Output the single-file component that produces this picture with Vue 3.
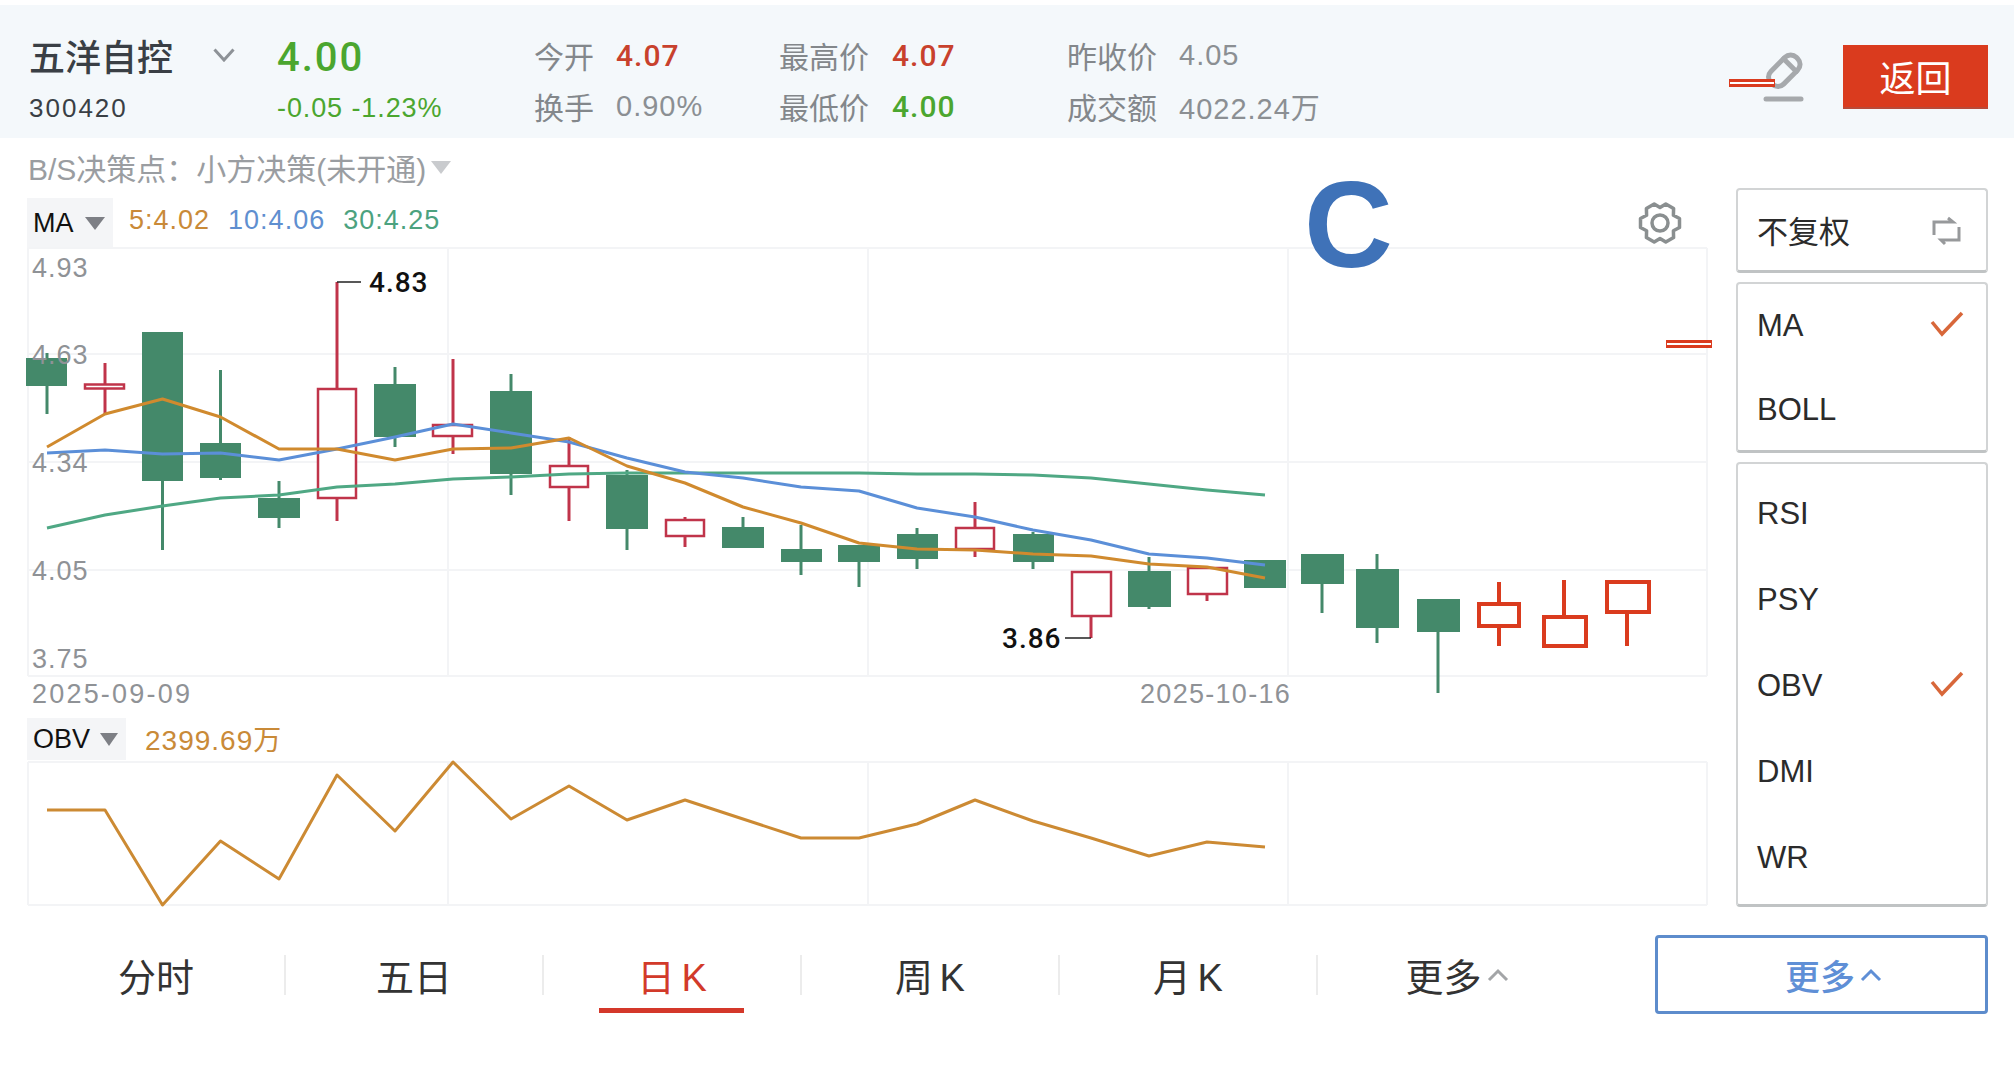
<template>
  <div class="page">
    <header class="quote">
      <div class="col col-name">
        <div class="line name">
          <span>五洋自控</span>
          <svg class="chevron" width="22" height="14" viewBox="0 0 22 14"><path d="M1.5 1.5 11 12 20.5 1.5" /></svg>
        </div>
        <div class="line code">300420</div>
      </div>
      <div class="col col-price">
        <div class="line price">4.00</div>
        <div class="line change">-0.05 -1.23%</div>
      </div>
      <div v-for="col in stats" :key="col.key" class="col stat-col" :class="`stat-${col.key}`">
        <div v-for="item in col.items" :key="item.label" class="line stat">
          <span class="stat-label">{{ item.label }}</span>
          <span class="stat-value" :class="item.tone">{{ item.value }}</span>
        </div>
      </div>
      <div class="actions">
        <svg class="pencil" width="46" height="56" viewBox="0 0 46 56">
          <g transform="rotate(45 24 23)">
            <rect x="15" y="6" width="18" height="36" rx="8" />
            <path d="M15 16H33" />
          </g>
          <path class="pencil-line" d="M5 52H40" />
        </svg>
        <button class="back">返回</button>
      </div>
    </header>

    <div class="body">
      <section class="charts">
        <div class="bs-row">
          <span>B/S决策点：小方决策(未开通)</span>
          <i class="tri tri-light"></i>
        </div>
        <div class="ma-row">
          <div class="tab tab-ma">MA<i class="tri"></i></div>
          <span class="ma-val c-orange">5:4.02</span>
          <span class="ma-val c-blue">10:4.06</span>
          <span class="ma-val c-green">30:4.25</span>
          <svg class="gear" width="46" height="46" viewBox="-23 -23 46 46">
            <path :d="gearPath" />
            <circle r="8" />
          </svg>
        </div>

        <svg class="kline" width="1736" height="460" viewBox="0 248 1736 460">
          <g class="grid">
            <path v-for="y in gridY" :key="y" :d="`M28 ${y}H1707`" />
            <path v-for="x in gridX" :key="x" :d="`M${x} 248V676`" />
          </g>
          <g v-for="c in candles" :key="c.x" :class="['candle', c.tone]">
            <line v-if="c.high < c.top" :x1="c.mid" :x2="c.mid" :y1="c.high" :y2="c.top" />
            <line v-if="c.low > c.bottom" :x1="c.mid" :x2="c.mid" :y1="c.bottom" :y2="c.low" />
            <rect :x="c.x" :y="c.top" :width="c.w" :height="c.bottom - c.top" />
          </g>
          <polyline class="avg avg-green" :points="maGreen" />
          <polyline class="avg avg-blue" :points="maBlue" />
          <polyline class="avg avg-orange" :points="maOrange" />
          <path class="leader" d="M337 282H361M1065 638H1091" />
          <text class="mark" x="369" y="292">4.83</text>
          <text class="mark" x="1002" y="648">3.86</text>
          <text v-for="a in axis" :key="a.text" class="axis" x="32" :y="a.y">{{ a.text }}</text>
          <text class="axis date-a" x="32" y="703">2025-09-09</text>
          <text class="axis date-b" x="1140" y="703">2025-10-16</text>
        </svg>

        <div class="obv-row">
          <div class="tab tab-obv">OBV<i class="tri"></i></div>
          <span class="obv-val">2399.69万</span>
        </div>
        <svg class="obv" width="1736" height="148" viewBox="0 760 1736 148">
          <g class="grid">
            <path d="M28 762H1707M28 905H1707" />
            <path v-for="x in gridX" :key="x" :d="`M${x} 762V905`" />
          </g>
          <polyline class="avg avg-obv" :points="obvLine" />
        </svg>
      </section>

      <aside class="side">
        <div class="box box-fq">
          <div class="side-item">
            <span>不复权</span>
            <svg class="swap" width="30" height="30" viewBox="0 0 30 30">
              <path d="M2 19V6H21L16 2M27 11V24H9L13 28" />
            </svg>
          </div>
        </div>
        <div v-for="(group, i) in menus" :key="i" class="box">
          <div v-for="item in group" :key="item.name" class="side-item">
            <span>{{ item.name }}</span>
            <svg v-if="item.on" class="tick" width="36" height="26" viewBox="0 0 36 26"><path d="M3 11 13 23 33 2" /></svg>
          </div>
        </div>
      </aside>
    </div>

    <footer class="bottom">
      <nav class="periods">
        <div v-for="p in periods" :key="p" class="period" :class="{ active: p === '日 K' }">{{ p }}</div>
        <div class="period period-more">
          更多<svg class="caret" width="22" height="14" viewBox="0 0 22 14"><path d="M2 12 11 3 20 12" /></svg>
        </div>
      </nav>
      <button class="more">
        更多<svg class="caret" width="22" height="14" viewBox="0 0 22 14"><path d="M2 12 11 3 20 12" /></svg>
      </button>
    </footer>

    <span class="big-c">C</span>
    <i class="redact redact-a"></i>
    <i class="redact redact-b"></i>
  </div>
</template>

<script setup>
const stats = [
  { key: 'a', items: [
    { label: '今开', value: '4.07', tone: 'up' },
    { label: '换手', value: '0.90%', tone: '' },
  ] },
  { key: 'b', items: [
    { label: '最高价', value: '4.07', tone: 'up' },
    { label: '最低价', value: '4.00', tone: 'down' },
  ] },
  { key: 'c', items: [
    { label: '昨收价', value: '4.05', tone: '' },
    { label: '成交额', value: '4022.24万', tone: '' },
  ] },
]

const menus = [
  [{ name: 'MA', on: true }, { name: 'BOLL' }],
  [{ name: 'RSI' }, { name: 'PSY' }, { name: 'OBV', on: true }, { name: 'DMI' }, { name: 'WR' }],
]

const periods = ['分时', '五日', '日 K', '周 K', '月 K']

const gridY = [248, 354, 462, 570, 676]
const gridX = [28, 448, 868, 1288, 1707]

const axis = [
  { text: '4.93', y: 277 },
  { text: '4.63', y: 364 },
  { text: '4.34', y: 472 },
  { text: '4.05', y: 580 },
  { text: '3.75', y: 668 },
]

// x, right, top, bottom, high, low, mid, tone
const raw = [
  [26, 67, 358, 386, 353, 414, 47, 'g'],
  [85, 124, 384.5, 388.5, 363, 415, 105, 'r'],
  [142, 183, 332, 481, 332, 550, 162.5, 'g'],
  [200, 241, 443, 478, 370, 480, 220.5, 'g'],
  [258, 300, 498, 518, 481, 528, 279, 'g'],
  [318, 356, 389, 498, 282, 521, 337, 'r'],
  [374, 416, 384, 437, 367, 447, 395, 'g'],
  [433, 472, 425, 436, 359, 454, 453, 'r'],
  [490, 532, 391, 474, 374, 495, 511, 'g'],
  [550, 588, 466, 487, 437, 521, 569, 'r'],
  [606, 648, 475, 529, 470, 550, 627, 'g'],
  [666, 704, 520, 536, 517, 547, 685, 'r'],
  [722, 764, 527, 548, 517, 548, 743, 'g'],
  [781, 822, 549, 562, 525, 575, 801, 'g'],
  [838, 880, 545, 562, 545, 587, 859, 'g'],
  [897, 938, 534, 559, 528, 569, 917, 'g'],
  [956, 994, 528, 549, 502, 557, 975, 'r'],
  [1013, 1054, 534, 562, 532, 569, 1033, 'g'],
  [1072, 1111, 572, 616, 572, 638, 1091, 'r'],
  [1128, 1171, 571, 607, 557, 609, 1149, 'g'],
  [1188, 1227, 568, 594, 568, 601, 1207, 'r'],
  [1244, 1286, 560, 588, 560, 588, 1265, 'g'],
  [1301, 1344, 554, 584, 554, 613, 1322, 'g'],
  [1356, 1399, 569, 628, 554, 643, 1377, 'g'],
  [1417, 1460, 599, 632, 599, 693, 1438, 'g'],
  [1479, 1519, 604, 626, 582, 646, 1499, 'o'],
  [1544, 1586, 617, 646, 580, 646, 1564, 'o'],
  [1607, 1649, 582, 612, 582, 646, 1627, 'o'],
]

const candles = raw.map(([x, right, top, bottom, high, low, mid, tone]) => ({
  x, w: right - x, top, bottom, high, low, mid, tone,
}))

const xs = [47, 105, 162.5, 220.5, 279, 337, 395, 453, 511, 569, 627, 685, 743, 801, 859, 917, 975, 1033, 1091, 1149, 1207, 1265]
const toPoints = (ys) => ys.map((y, i) => `${xs[i]},${y}`).join(' ')

const maOrange = toPoints([447, 414, 399, 417, 449, 449, 460, 449, 448, 438, 466, 483, 507, 523, 543, 549, 550, 554, 556, 564, 567, 578])
const maBlue = toPoints([453, 450, 454, 453, 460, 449, 437, 424, 433, 442, 458, 472, 478, 487, 491, 508, 517, 530, 540, 554, 558, 565])
const maGreen = toPoints([528, 515, 506, 498, 495, 487, 484, 479, 477, 474, 473, 473, 473, 473, 473, 474, 474, 475, 478, 484, 490, 495])
const obvLine = toPoints([810, 810, 905, 841, 879, 775, 831, 762, 819, 786, 820, 800, 819, 838, 838, 824, 800, 821, 838, 856, 842, 847])

// six rounded teeth, flat on the left and right
const gearPath = (() => {
  const pts = []
  for (let k = 0; k < 6; k++) {
    const a = k * 60
    for (const [deg, r] of [[a - 13, 20], [a + 13, 20], [a + 30, 15.5]]) {
      const t = (deg * Math.PI) / 180
      pts.push(`${(Math.cos(t) * r).toFixed(1)} ${(Math.sin(t) * r).toFixed(1)}`)
    }
  }
  return `M${pts.join('L')}Z`
})()
</script>

<style>
html, body { background: #fff; }
</style>

<style scoped>
.page {
  position: relative;
  width: 2014px;
  height: 1090px;
  overflow: hidden;
  background: #fff;
  font-family: "Liberation Sans", "Noto Sans CJK SC", sans-serif;
  color: #2b2b2b;
}

.quote {
  display: flex;
  box-sizing: border-box;
  height: 133px;
  margin-top: 5px;
  padding: 31px 26px 0 29px;
  background: #f4f8fb;
}
.col { display: flex; flex-direction: column; gap: 12px; }
.line { display: flex; align-items: center; box-sizing: border-box; height: 40px; }
.col-name { width: 248px; }
.col-price { width: 257px; }
.name { padding-bottom: 2px; font-size: 36px; font-weight: 500; color: #3a3f45; }
.chevron { margin-left: 40px; fill: none; stroke: #8d9297; stroke-width: 3; }
.code { font-size: 26px; color: #3a3f45; letter-spacing: 2px; }
.price { padding-top: 2px; font-family: Roboto, "Liberation Sans", sans-serif; font-size: 40px; font-weight: 500; color: #4ba62f; letter-spacing: 2px; }
.change { font-size: 27px; color: #4ba62f; letter-spacing: 0.9px; }

.stat-col { gap: 11px; margin-top: -1px; }
.stat-label { font-size: 30px; color: #83878b; }
.stat-value { font-size: 29px; color: #8b8f93; letter-spacing: 1px; }
.stat-value.up { font-family: Roboto, "Liberation Sans", sans-serif; color: #c8412d; font-size: 30px; font-weight: 500; }
.stat-value.down { font-family: Roboto, "Liberation Sans", sans-serif; color: #4ba62f; font-size: 30px; font-weight: 500; }
.stat-a { width: 245px; }
.stat-a .stat-label { width: 82px; }
.stat-b { width: 288px; }
.stat-b .stat-label { width: 113px; }
.stat-c .stat-label { width: 112px; }

.actions { display: flex; align-items: flex-start; margin-left: auto; padding-top: 9px; }
.pencil { margin-right: 36px; margin-top: 2px; fill: none; stroke: #a6a9ac; stroke-width: 5; stroke-linecap: round; }
.pencil-line { stroke-width: 5; }
.back {
  width: 145px;
  height: 64px;
  padding: 0;
  border: 0;
  border-bottom: 2px solid #b94a38;
  background: #da3b1e;
  color: #fff;
  font: 36px "Liberation Sans", "Noto Sans CJK SC", sans-serif;
}

.body { display: flex; }
.charts { width: 1736px; flex-shrink: 0; }
.bs-row {
  display: flex;
  align-items: center;
  height: 58px;
  padding: 0 0 2px 28px;
  color: #9a9da1;
  font-size: 30px;
}
.tri {
  display: inline-block;
  width: 0;
  height: 0;
  border-left: 10px solid transparent;
  border-right: 10px solid transparent;
  border-top: 13px solid #7d7f85;
}
.tri-light { margin-left: 5px; border-top-color: #c9cbce; }
.ma-row { display: flex; align-items: center; height: 50px; padding-left: 27px; }
.tab {
  display: flex;
  align-items: center;
  box-sizing: border-box;
  height: 100%;
  padding-left: 6px;
  background: #f4f5f7;
  color: #111;
  font-size: 27px;
}
.tab-ma { width: 86px; }
.tab-ma .tri { margin-left: 11px; }
.ma-val { padding-bottom: 5px; font-size: 27px; letter-spacing: 1px; }
.c-orange { margin-left: 16px; color: #c98a38; }
.c-blue { margin-left: 18px; color: #5f8fd0; }
.c-green { margin-left: 18px; color: #4ca27f; }
.gear { margin-left: auto; margin-right: 53px; fill: none; stroke: #8a8f90; stroke-width: 3.5; stroke-linejoin: round; }

.kline, .obv { display: block; overflow: visible; }
.grid path { fill: none; stroke: #f3f4f6; stroke-width: 2; }
.candle line { stroke-width: 3; }
.candle rect { stroke-width: 3; }
.g line { stroke: #44896a; }
.g rect { fill: #44896a; stroke: none; }
.r line { stroke: #c0344a; }
.r rect { fill: #fff; stroke: #c0344a; stroke-width: 2.5; }
.o line { stroke: #da3b1e; stroke-width: 4; }
.o rect { fill: #fff; stroke: #da3b1e; stroke-width: 4; }
.avg { fill: none; stroke-width: 3; stroke-linejoin: round; }
.avg-orange { stroke: #d08a2e; }
.avg-blue { stroke: #5b8fd8; }
.avg-green { stroke: #4fa884; }
.avg-obv { stroke: #cc8a33; }
.leader { fill: none; stroke: #222; stroke-width: 1.5; }
.mark { font-family: Roboto, "Liberation Sans", sans-serif; font-size: 28px; font-weight: 500; fill: #111; letter-spacing: 1px; }
.axis { font-size: 27px; fill: #8f9296; letter-spacing: 1px; }
.date-a { letter-spacing: 2.2px; }
.date-b { letter-spacing: 1.3px; }

.obv-row { display: flex; align-items: center; height: 42px; margin-top: 10px; padding-left: 27px; }
.tab-obv { width: 99px; }
.tab-obv .tri { margin-left: 10px; border-left-width: 9px; border-right-width: 9px; }
.obv-val { margin-left: 19px; padding-bottom: 2px; color: #c98a38; font-size: 28px; letter-spacing: 1px; }

.side { display: flex; flex-direction: column; gap: 9px; width: 252px; margin-top: 50px; }
.box {
  box-sizing: border-box;
  height: 171px;
  border: 2px solid #d2d4d5;
  border-bottom: 3px solid #c0c3c4;
  border-radius: 4px;
}
.box-fq { height: 85px; }
.box:last-child { height: 445px; padding-top: 7px; }
.side-item {
  display: flex;
  align-items: center;
  justify-content: space-between;
  box-sizing: border-box;
  height: 84px;
  padding: 0 20px 0 19px;
  font-size: 31px;
}
.box:last-child .side-item { height: 86px; }
.box-fq .side-item { height: 82px; padding-bottom: 4px; }
.tick { margin-top: -4px; margin-right: 1px; fill: none; stroke: #d8673a; stroke-width: 3.5; }
.swap { fill: none; stroke: #97999b; stroke-width: 3; margin-top: 4px; margin-right: 4px; }

.bottom { display: flex; align-items: center; height: 79px; margin-top: 27px; padding: 0 26px 0 28px; }
.periods { display: flex; align-items: center; }
.period {
  position: relative;
  display: flex;
  align-items: center;
  justify-content: center;
  box-sizing: border-box;
  width: 258px;
  height: 40px;
  border-right: 2px solid #ececec;
  color: #333;
  font-size: 38px;
  word-spacing: -4px;
}
.period.active { color: #d23a2a; }
.period.active::after {
  content: "";
  position: absolute;
  left: 55px;
  top: 53px;
  width: 145px;
  height: 5px;
  background: #d4382a;
}
.period-more { width: 278px; border-right: 0; }
.caret { margin-left: 5px; fill: none; stroke: #a3a5a7; stroke-width: 3; }
.more {
  display: flex;
  align-items: center;
  justify-content: center;
  box-sizing: border-box;
  width: 333px;
  height: 79px;
  margin-left: auto;
  padding: 0 0 0 24px;
  border: 3px solid #5d8ccc;
  border-radius: 4px;
  background: #fff;
  color: #5f8fd6;
  font: 500 35px "Liberation Sans", "Noto Sans CJK SC", sans-serif;
}
.more .caret { stroke: #5f8fd6; }

.big-c {
  position: absolute;
  left: 1304px;
  top: 151px;
  color: #3f72b8;
  font-size: 123px;
  font-weight: 700;
  line-height: 1.2;
}
.redact {
  position: absolute;
  box-sizing: border-box;
  width: 46px;
  height: 8px;
  background: #fff;
  border: solid #da3b1e;
  border-width: 3px 1px;
}
.redact-a { left: 1729px; top: 79px; }
.redact-b { left: 1666px; top: 340px; }
</style>
